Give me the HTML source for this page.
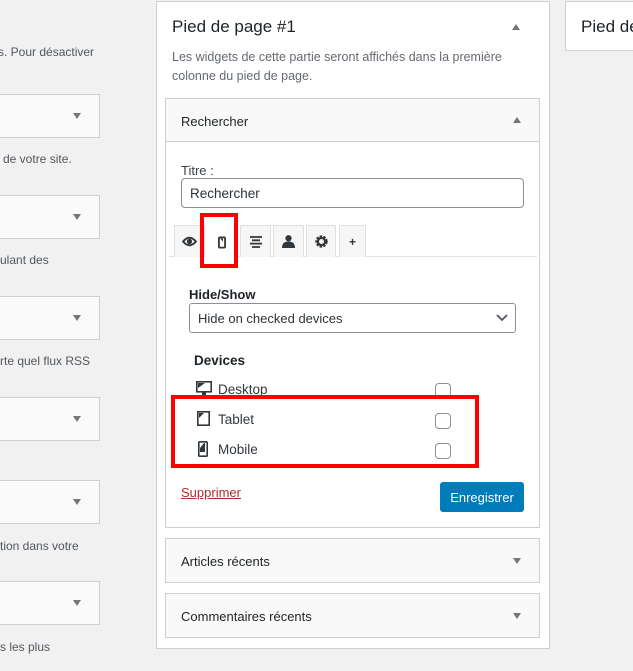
<!DOCTYPE html>
<html><head><meta charset="utf-8"><style>
*{box-sizing:border-box;margin:0;padding:0}
body{width:633px;height:671px;background:#f1f1f1;font-family:"Liberation Sans",sans-serif;font-size:13px;color:#32373c;position:relative;overflow:hidden}
.a{position:absolute}
.t{margin-top:1px}
.lb{position:absolute;left:-2px;width:102px;height:44px;background:#fafafa;border:1px solid #ccd0d4}
.lb:after{content:"";position:absolute;right:18px;top:18px;border-left:4px solid transparent;border-right:4px solid transparent;border-top:6px solid #72777c}
.lt{position:absolute;left:0;font-size:12px;color:#50575e;white-space:nowrap;margin-top:1px}
.up{position:absolute;border-left:4px solid transparent;border-right:4px solid transparent;border-bottom:6px solid #72777c}
.dn{position:absolute;border-left:4px solid transparent;border-right:4px solid transparent;border-top:6px solid #72777c}
.tab{position:absolute;top:225px;height:32px;background:#f6f6f6;border:1px solid #e0e0e0;border-bottom:none;display:flex;align-items:center;justify-content:center;color:#32373c}
.cb{position:absolute;left:435px;width:16px;height:16px;border:1px solid #8c8f94;border-radius:4px;background:#fff}
.red{position:absolute;border:4px solid #f00}
</style></head><body>
<div class="lt" style="top:44px;left:-2px">s. Pour désactiver</div>
<div class="lb" style="top:94px"></div><div class="lt" style="top:151px;left:3px">de votre site.</div>
<div class="lb" style="top:195px"></div><div class="lt" style="top:252px">ulant des</div>
<div class="lb" style="top:296px"></div><div class="lt" style="top:353px">rte quel flux RSS</div>
<div class="lb" style="top:397px"></div>
<div class="lb" style="top:480px"></div><div class="lt" style="top:538px">tion dans votre</div>
<div class="lb" style="top:581px"></div><div class="lt" style="top:639px">s les plus</div>

<div class="a" style="left:156px;top:1px;width:394px;height:648px;background:#fff;border:1px solid #ccd0d4"></div>
<div class="a t" style="left:172px;top:16px;font-size:17px;color:#1d2327">Pied de page #1</div>
<div class="up" style="left:512px;top:24px"></div>
<div class="a t" style="left:172px;top:47px;width:360px;font-size:12.5px;line-height:19px;color:#646970">Les widgets de cette partie seront affichés dans la première colonne du pied de page.</div>

<div class="a" style="left:565px;top:1px;width:80px;height:50px;background:#fff;border:1px solid #ccd0d4"></div>
<div class="a t" style="left:581px;top:16px;font-size:17px;color:#1d2327;white-space:nowrap">Pied de</div>

<div class="a" style="left:165px;top:98px;width:375px;height:430px;background:#fff;border:1px solid #ccd0d4"></div>
<div class="a" style="left:166px;top:99px;width:373px;height:43px;background:#f9f9f9;border-bottom:1px solid #ccd0d4"></div>
<div class="a t" style="left:181px;top:113px;font-size:13px;color:#1d2327">Rechercher</div>
<div class="up" style="left:513px;top:117px"></div>

<div class="a t" style="left:181px;top:162px;color:#3c434a">Titre :</div>
<div class="a" style="left:181px;top:178px;width:343px;height:30px;border:1px solid #8c8f94;border-radius:4px;padding:7px 8px;font-size:13.5px;color:#2c3338">Rechercher</div>

<div class="a" style="left:169px;top:256px;width:368px;height:1px;background:#e5e5e5"></div>
<div class="tab" style="left:174px;width:31px"><svg width="15" height="11" viewBox="0 0 14 10"><path d="M1 5Q7-2 13 5Q7 12 1 5Z" fill="none" stroke="#32373c" stroke-width="1.8"/><circle cx="7" cy="5" r="2.4" fill="#32373c"/></svg></div>
<div class="tab" style="left:206px;width:32px;background:#fff;border-color:#fff;height:33px"><svg width="8" height="13" viewBox="0 0 8 12"><rect x="0.9" y="0.9" width="6.2" height="10.2" rx="1" fill="none" stroke="#32373c" stroke-width="1.8"/><path d="M2 2h3v3z" fill="#32373c"/></svg></div>
<div class="tab" style="left:240px;width:31px"><svg width="12" height="12" viewBox="0 0 12 12"><path d="M0 1h12M2 4.3h8M0 7.6h12M2 11h8" stroke="#32373c" stroke-width="1.8"/></svg></div>
<div class="tab" style="left:273px;width:31px"><svg width="13" height="13" viewBox="0 0 12 12"><circle cx="6" cy="3" r="2.9" fill="#32373c"/><path d="M0 12Q0 6 6 6Q12 6 12 12Z" fill="#32373c"/></svg></div>
<div class="tab" style="left:306px;width:30px"><svg width="13" height="13" viewBox="0 0 12 12"><circle cx="6" cy="6" r="4.3" fill="none" stroke="#32373c" stroke-width="2.8" stroke-dasharray="2.1 1"/><circle cx="6" cy="6" r="3.3" fill="none" stroke="#32373c" stroke-width="2"/></svg></div>
<div class="tab" style="left:339px;width:27px;font-size:12px;font-weight:bold">+</div>
<div class="red" style="left:200px;top:213px;width:38px;height:55px"></div>

<div class="a t" style="left:189px;top:286px;font-weight:bold;color:#1d2327">Hide/Show</div>
<div class="a" style="left:189px;top:303px;width:327px;height:30px;border:1px solid #8c8f94;border-radius:3px;padding:7px 8px;color:#2c3338">Hide on checked devices</div>
<svg class="a" style="left:496px;top:314px" width="12" height="8" viewBox="0 0 12 8"><path d="M1 1l5 5 5-5" fill="none" stroke="#50575e" stroke-width="1.8"/></svg>

<div class="a t" style="left:194px;top:352px;font-weight:bold;font-size:13.5px;color:#1d2327">Devices</div>
<svg class="a" style="left:196px;top:381px" width="16" height="15" viewBox="0 0 16 15"><rect x="0.8" y="0.8" width="14.4" height="10" fill="none" stroke="#32373c" stroke-width="1.6"/><path d="M2 2h7l-7 5z" fill="#32373c"/><rect x="6" y="11" width="4" height="3" fill="#32373c"/></svg>
<div class="a t" style="left:218px;top:381px;font-size:13.5px">Desktop</div>
<div class="cb" style="top:383px"></div>
<svg class="a" style="left:197px;top:411px" width="13" height="15" viewBox="0 0 13 15"><rect x="0.8" y="0.8" width="11.4" height="13.4" fill="none" stroke="#32373c" stroke-width="1.6"/><path d="M2 2h5l-5 5z" fill="#32373c"/></svg>
<div class="a t" style="left:218px;top:411px;font-size:13.5px">Tablet</div>
<div class="cb" style="top:413px"></div>
<svg class="a" style="left:198px;top:441px" width="10" height="16" viewBox="0 0 10 16"><rect x="0.8" y="0.8" width="8.4" height="14.4" rx="1" fill="none" stroke="#32373c" stroke-width="1.6"/><path d="M2 2h5v9h-5z" fill="#32373c"/><path d="M2 2h4l-4 5z" fill="#fff"/></svg>
<div class="a t" style="left:218px;top:441px;font-size:13.5px">Mobile</div>
<div class="cb" style="top:443px"></div>
<div class="red" style="left:171px;top:395px;width:308px;height:73px"></div>

<div class="a t" style="left:181px;top:484px;color:#b32d2e;text-decoration:underline">Supprimer</div>
<div class="a" style="left:440px;top:482px;width:84px;height:30px;background:#007cba;border-radius:3px;color:#fff;text-align:center;line-height:31px">Enregistrer</div>

<div class="a" style="left:165px;top:538px;width:375px;height:45px;background:#f9f9f9;border:1px solid #ccd0d4"></div>
<div class="a t" style="left:181px;top:553px;color:#1d2327">Articles récents</div>
<div class="dn" style="left:513px;top:558px"></div>
<div class="a" style="left:165px;top:593px;width:375px;height:45px;background:#f9f9f9;border:1px solid #ccd0d4"></div>
<div class="a t" style="left:181px;top:608px;color:#1d2327">Commentaires récents</div>
<div class="dn" style="left:513px;top:613px"></div>
</body></html>
